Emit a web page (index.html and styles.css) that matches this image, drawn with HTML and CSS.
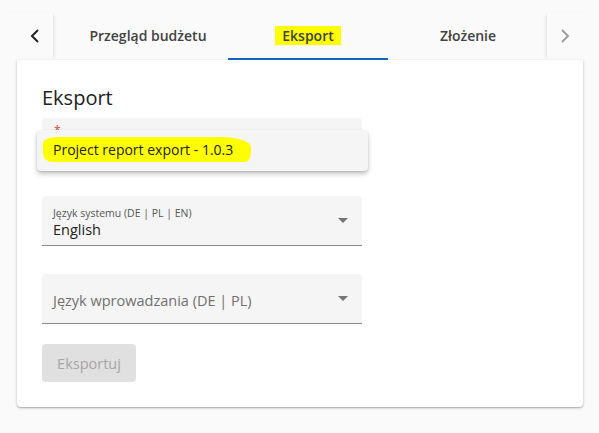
FILE: index.html
```html
<!DOCTYPE html>
<html lang="pl">
<head>
<meta charset="utf-8">
<link rel="stylesheet" href="styles.css">
</head>
<body>
<div class="page">
  <div class="tabbar">
    <button class="pager pager-left" aria-label="prev">
      <svg width="14" height="16" viewBox="0 0 14 16"><path d="M10 2 L4 8 L10 14" fill="none" stroke="#222" stroke-width="2"/></svg>
    </button>
    <div class="tabs">
      <div class="tab">Przegląd budżetu</div>
      <div class="tab active"><span class="hl">Eksport</span></div>
      <div class="tab">Złożenie</div>
    </div>
    <button class="pager pager-right" aria-label="next">
      <svg width="14" height="16" viewBox="0 0 14 16"><path d="M4 2 L10 8 L4 14" fill="none" stroke="#9e9e9e" stroke-width="2"/></svg>
    </button>
  </div>
  <div class="card">
    <h1 class="title">Eksport</h1>
    <div class="field field-first">
      <span class="req">*</span>
      <div class="menu">
        <div class="menu-item"><span class="hl2">Project report export - 1.0.3</span></div>
      </div>
    </div>
    <div class="field">
      <div class="field-inner">
        <div class="label">Język systemu (DE | PL | EN)</div>
        <div class="value">English</div>
      </div>
      <span class="arrow"></span>
    </div>
    <div class="field">
      <div class="field-inner">
        <div class="placeholder">Język wprowadzania (DE | PL)</div>
      </div>
      <span class="arrow"></span>
    </div>
    <button class="btn" disabled>Eksportuj</button>
  </div>
</div>
</body>
</html>
```
FILE: styles.css
```css
* { box-sizing: border-box; }
html, body { margin: 0; padding: 0; }
body {
  background: #fafafa;
  font-family: "Open Sans", "Noto Sans", sans-serif;
  color: #212121;
  width: 599px;
  height: 433px;
  overflow: hidden;
}
.page { padding-top: 12px; }
.tabbar {
  display: flex;
  height: 48px;
}
.pager {
  width: 53px;
  border: 0;
  background: transparent;
  display: flex;
  align-items: center;
  justify-content: center;
  padding: 0;
  position: relative;
  z-index: 1;
}
.pager-left { padding-left: 16px; box-shadow: 3px 0 4px -3px rgba(0,0,0,0.18); }
.pager-right { width: 52px; padding-right: 16px; box-shadow: -3px 0 4px -3px rgba(0,0,0,0.18); }
.tabs {
  flex: 1;
  display: flex;
  overflow: hidden;
  padding-left: 15px;
}
.tab {
  flex: 0 0 160px;
  display: flex;
  align-items: center;
  justify-content: center;
  font-size: 14px;
  font-weight: 600;
  color: #424242;
  border-bottom: 2px solid transparent;
}
.tab.active { border-bottom-color: #1565c0; }
.hl {
  background: #ffff00;
  padding: 0 7px;
  line-height: 19px;
  margin-top: 0;
}
.card {
  margin: 0 16px 0 17px;
  background: #fff;
  border-radius: 0 0 4px 4px;
  box-shadow: 0 1px 3px rgba(0,0,0,0.25), 0 1px 1px rgba(0,0,0,0.12);
  padding: 24px 25px 25px;
  height: 347px;
}
.title {
  margin: 0 0 6px;
  font-size: 20px;
  font-weight: 400;
  line-height: 28px;
  color: #212121;
}
.field {
  width: 320px;
  height: 50px;
  background: #f5f5f5;
  border-radius: 4px 4px 0 0;
  border-bottom: 1px solid #8a8a8a;
  position: relative;
  margin-bottom: 28px;
  display: flex;
  align-items: center;
  padding: 0 11px;
}
.req {
  position: absolute;
  left: 12px;
  top: 4px;
  color: #e53935;
  font-size: 12px;
}
.menu {
  position: absolute;
  left: -5px;
  top: 12px;
  width: 331px;
  height: 41px;
  background: #f5f5f5;
  border-radius: 4px;
  box-shadow: 0 3px 5px rgba(0,0,0,0.22), 0 1px 2px rgba(0,0,0,0.12);
  display: flex;
  align-items: center;
  padding-left: 16px;
}
.menu-item { font-size: 14px; color: #212121; margin-top: -2px; }
.hl2 {
  background: #ffff00;
  padding: 3px 18px 3px 10px;
  border-radius: 14px 30px 6px 10px / 6px 10px 10px 8px;
  margin-left: -10px;
}
.field-inner { flex: 1; padding-top: 4px; }
.label { font-size: 10.5px; color: #555; line-height: 14px; }
.value { font-size: 14.5px; color: #212121; line-height: 20px; }
.placeholder { font-size: 14.5px; color: #707070; line-height: 20px; }
.arrow {
  width: 0; height: 0;
  border-left: 5px solid transparent;
  border-right: 5px solid transparent;
  border-top: 5px solid #757575;
  margin-right: 3px;
}
.btn {
  display: block;
  width: 94px;
  height: 38px;
  background: #e0e0e0;
  border: 0;
  border-radius: 4px;
  font-family: "Open Sans", "Noto Sans", sans-serif;
  font-size: 14.5px;
  color: #a5a5a5;
  margin-top: -8px;
}
```
